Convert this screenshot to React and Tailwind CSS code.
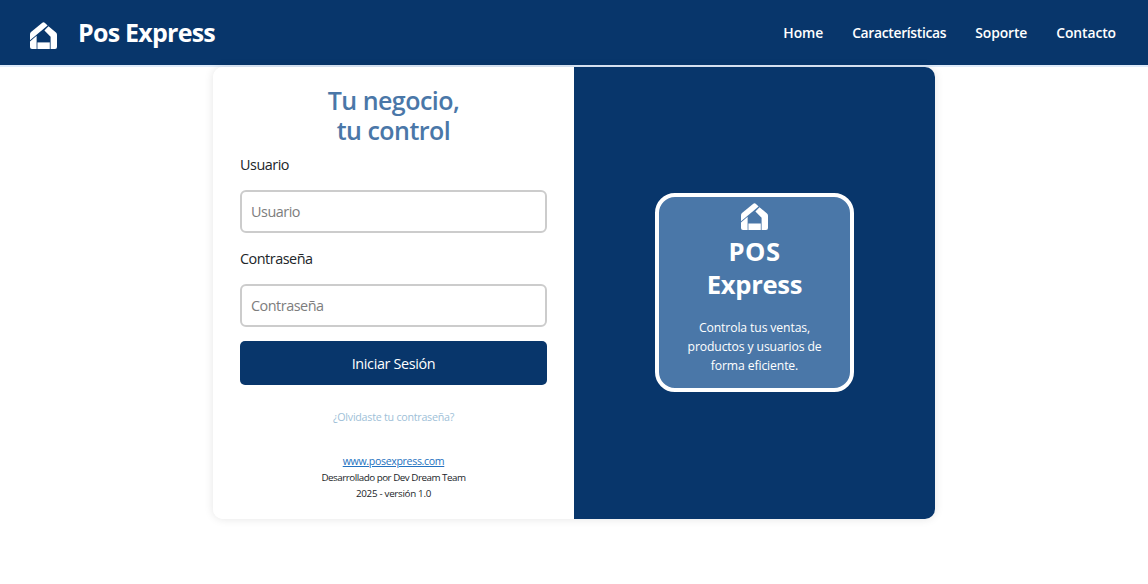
function HomeLogo() {
  return (
    <svg viewBox="0 0 27 27" className="block size-[27px] shrink-0 fill-white" aria-hidden="true">
      <path d="M0 18.2V12.2Q0 10.9 1 10L12 .9Q13.5-.2 15 .9L17.6 3.4Z" />
      <path d="M18.5 4.2L26 10.6Q27 11.5 27 12.8V25Q27 27 25 27H20.6V14.8L14.4 8.6Z" />
      <path d="M0 19.6L6.6 13.8V27H2Q0 27 0 25Z" />
      <path d="M7.4 20.4H19.8V27H7.4Z" />
    </svg>
  );
}

function Field({ id, label, type }) {
  return (
    <div className="flex flex-col">
      <label htmlFor={id} className="h-6 text-[14.4px] leading-6 tracking-[-0.48px] text-[#212529]">{label}</label>
      <input
        id={id}
        type={type}
        placeholder={label}
        className="mt-[13px] h-[43px] w-full rounded-md border-2 border-[#cccccc] bg-white px-[9px] text-[14.4px] tracking-[-0.48px] text-[#212529] placeholder:text-[#7d7d7d]"
      />
    </div>
  );
}

export default function App() {
  return (
    <div className="min-h-screen bg-white font-['Open_Sans','Noto_Sans',sans-serif]">
      <header className="flex h-[65px] items-center justify-between bg-[#08366b] pr-8 pl-[30px] text-white">
        <div className="flex items-center gap-[21px]">
          <div className="pt-[5px]"><HomeLogo /></div>
          <span className="text-[25px] font-bold tracking-[-0.76px]">Pos Express</span>
        </div>
        <nav className="flex gap-[29px] pt-0.5 text-[13.9px] font-semibold tracking-[-0.1px]">
          <a href="#home">Home</a>
          <a href="#features" className="tracking-[-0.33px]">Características</a>
          <a href="#support">Soporte</a>
          <a href="#contact">Contacto</a>
        </nav>
      </header>
      <div className="h-0.5 bg-[#deebfa]" />
      <main className="mx-auto flex h-[452px] w-[722px] overflow-hidden rounded-[10px] shadow-[0_0_10px_rgba(0,0,0,0.11)]">
        <section className="flex w-[361px] flex-col bg-white px-[27px] pt-[18px]">
          <h1 className="text-center text-[25px] leading-[30px] font-semibold tracking-[-0.52px] text-[#4a77a8]">
            Tu negocio,<br />tu control
          </h1>
          <form className="mt-2 flex flex-col gap-[14px]">
            <Field id="user" label="Usuario" type="text" />
            <Field id="password" label="Contraseña" type="password" />
            <button type="button" className="h-[44px] rounded-[5px] bg-[#08366b] pt-0.5 text-[14.4px] tracking-[-0.35px] text-white">Iniciar Sesión</button>
          </form>
          <a href="#recover" className="mt-[23px] text-center text-[10.7px] leading-[18px] tracking-[-0.25px] text-[#a0bfd8]">¿Olvidaste tu contraseña?</a>
          <footer className="mt-[27px] text-center text-[9.8px] leading-[16.5px] tracking-[-0.3px] text-[#212529]">
            <a href="#site" className="block text-[10.6px] tracking-[-0.34px] text-[#2472c0] underline">www.posexpress.com</a>
            <p className="tracking-[-0.48px]">Desarrollado por Dev Dream Team</p>
            <p>2025 - versión 1.0</p>
          </footer>
        </section>
        <section className="flex w-[361px] items-center justify-center bg-[#08366b] pb-px">
          <div className="flex size-[199px] flex-col items-center rounded-[20px] border-4 border-white bg-[#4a77a8] pt-[6px] text-center text-white">
            <HomeLogo />
            <h2 className="mt-[5px] text-[25.6px] leading-[33px] font-bold tracking-[-0.3px]"><span className="tracking-[0.5px]">POS</span><br />Express</h2>
            <p className="mt-[17px] text-[12.2px] leading-[19px] tracking-[-0.12px]">Controla tus ventas,<br />productos y usuarios de<br />forma eficiente.</p>
          </div>
        </section>
      </main>
    </div>
  );
}
